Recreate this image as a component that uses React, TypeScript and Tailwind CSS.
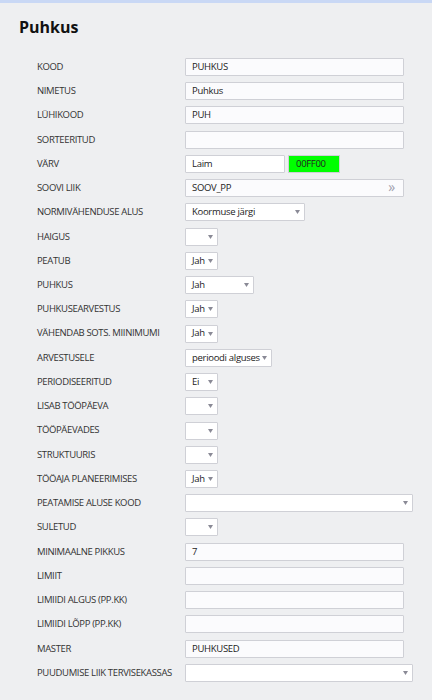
type Row =
  | { label: string; kind: 'text'; value?: string }
  | { label: string; kind: 'select'; value?: string; w: string }
  | { label: string; kind: 'color' }
  | { label: string; kind: 'lookup'; value: string };

const rows: Row[] = [
  { label: 'KOOD', kind: 'text', value: 'PUHKUS' },
  { label: 'NIMETUS', kind: 'text', value: 'Puhkus' },
  { label: 'LÜHIKOOD', kind: 'text', value: 'PUH' },
  { label: 'SORTEERITUD', kind: 'text' },
  { label: 'VÄRV', kind: 'color' },
  { label: 'SOOVI LIIK', kind: 'lookup', value: 'SOOV_PP' },
  { label: 'NORMIVÄHENDUSE ALUS', kind: 'select', value: 'Koormuse järgi', w: 'w-[120px]' },
  { label: 'HAIGUS', kind: 'select', w: 'w-[33px]' },
  { label: 'PEATUB', kind: 'select', value: 'Jah', w: 'w-[33px]' },
  { label: 'PUHKUS', kind: 'select', value: 'Jah', w: 'w-[69px]' },
  { label: 'PUHKUSEARVESTUS', kind: 'select', value: 'Jah', w: 'w-[33px]' },
  { label: 'VÄHENDAB SOTS. MIINIMUMI', kind: 'select', value: 'Jah', w: 'w-[33px]' },
  { label: 'ARVESTUSELE', kind: 'select', value: 'perioodi alguses', w: 'w-[87px]' },
  { label: 'PERIODISEERITUD', kind: 'select', value: 'Ei', w: 'w-[33px]' },
  { label: 'LISAB TÖÖPÄEVA', kind: 'select', w: 'w-[33px]' },
  { label: 'TÖÖPÄEVADES', kind: 'select', w: 'w-[33px]' },
  { label: 'STRUKTUURIS', kind: 'select', w: 'w-[33px]' },
  { label: 'TÖÖAJA PLANEERIMISES', kind: 'select', value: 'Jah', w: 'w-[33px]' },
  { label: 'PEATAMISE ALUSE KOOD', kind: 'select', w: 'w-[228px]' },
  { label: 'SULETUD', kind: 'select', w: 'w-[33px]' },
  { label: 'MINIMAALNE PIKKUS', kind: 'text', value: '7' },
  { label: 'LIMIIT', kind: 'text' },
  { label: 'LIMIIDI ALGUS (PP.KK)', kind: 'text' },
  { label: 'LIMIIDI LÕPP (PP.KK)', kind: 'text' },
  { label: 'MASTER', kind: 'text', value: 'PUHKUSED' },
  { label: 'PUUDUMISE LIIK TERVISEKASSAS', kind: 'select', w: 'w-[228px]' },
];

const box =
  'h-[18px] border border-[#cfd0d6] rounded-[1px] bg-[#fbfbfd] flex items-center whitespace-nowrap text-[9.5px] tracking-[-0.3px] text-[#222] px-[6px]';

function Field({ row }: { row: Row }) {
  if (row.kind === 'text') {
    return <div className={`${box} w-[219px]`}>{row.value}</div>;
  }
  if (row.kind === 'color') {
    return (
      <div className="flex gap-[3px]">
        <div className={`${box} w-[100px] bg-white`}>Laim</div>
        <div className="h-[18px] w-[52px] border border-[#cfd0d6] bg-[#00ff00] flex items-center px-[7px] text-[9.5px] tracking-[-0.3px] text-[#222]">
          00FF00
        </div>
      </div>
    );
  }
  if (row.kind === 'lookup') {
    return (
      <div className={`${box} w-[219px] justify-between`}>
        <span>{row.value}</span>
        <span className="text-[#a0a0ac] text-[14px] leading-none mr-[2px] -mt-[2px]">»</span>
      </div>
    );
  }
  return (
    <div className={`${box} ${row.w} bg-white justify-between pr-[4px]`}>
      <span>{row.value}</span>
      <svg width="5" height="4" viewBox="0 0 5 4" className="shrink-0">
        <path d="M0 0h5L2.5 4z" fill="#8a8a96" />
      </svg>
    </div>
  );
}

export default function App() {
  return (
    <div
      className="w-[432px] h-[700px] bg-[#eeeff1] overflow-hidden"
      style={{ fontFamily: '"Open Sans", "Noto Sans", sans-serif' }}
    >
      <div className="h-[3px] bg-[#c9d8f5]" />
      <h1 className="pl-[19px] pt-[14px] text-[16px] font-bold text-[#111] leading-[20px]">Puhkus</h1>
      <div className="pt-[21px] flex flex-col">
        {rows.map((row) => (
          <div key={row.label} className="h-[24.24px] flex items-start">
            <div className="w-[185px] pl-[37px] h-[18px] flex items-center whitespace-nowrap text-[9.5px] tracking-[-0.35px] text-[#333]">
              {row.label}
            </div>
            <Field row={row} />
          </div>
        ))}
      </div>
    </div>
  );
}
